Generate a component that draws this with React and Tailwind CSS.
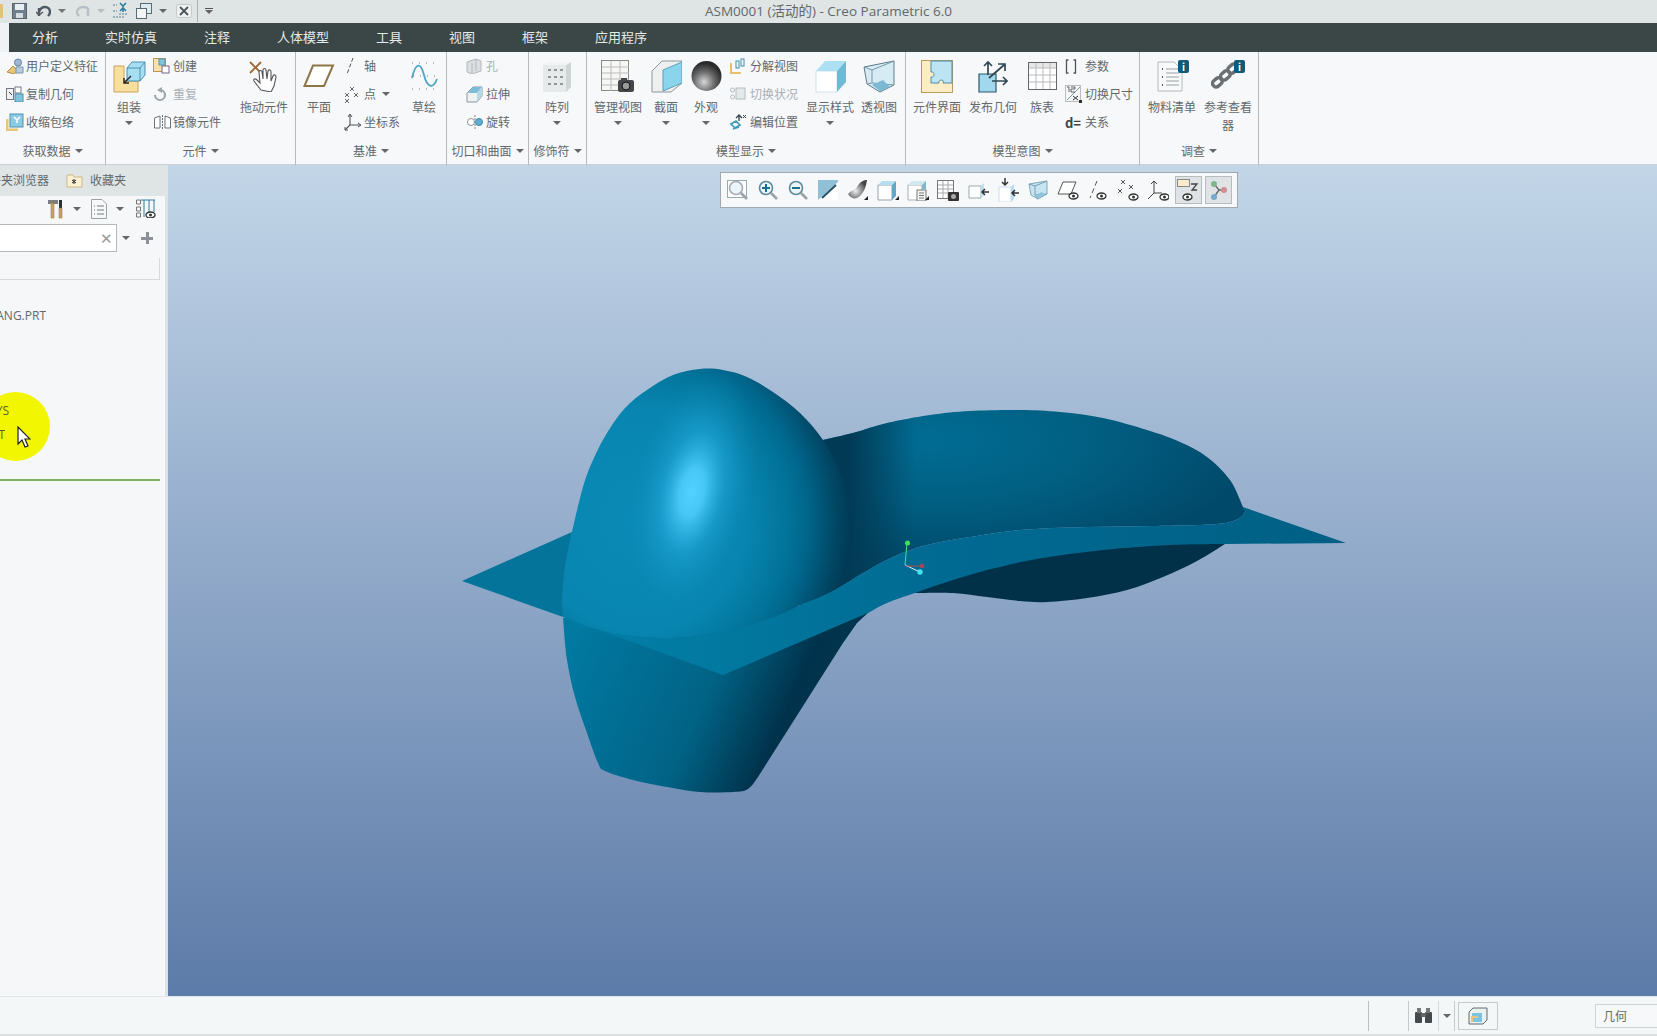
import React from "react";

const Svg = ({ w = 16, h = 16, vb, children, className = "" }) => (
  <svg width={w} height={h} viewBox={vb || `0 0 ${w} ${h}`} className={`block shrink-0 ${className}`} fill="none">{children}</svg>
);
const Arrow = ({ className = "" }) => <span className={`inline-block w-0 h-0 border-x-[4px] border-x-transparent border-t-[4px] border-t-[#666] ${className}`} />;

/* quick access icons */
const Save = () => <Svg w={15} h={16}><rect x=".5" y=".5" width="14" height="15" fill="#6f7f8c" stroke="#58646e"/><rect x="3" y="1" width="9" height="6" fill="#e8eef2"/><rect x="4" y="10" width="7" height="5" fill="#d5dce0"/></Svg>;
const Undo = ({ c = "#4f5b64" }) => <Svg w={15} h={13}><path d="M3 11V3M3 7c1-3 3-5 6-5 3 0 5 2 5 5 0 2-1 3-2 4" stroke={c} strokeWidth="2.4"/><path d="M0 7l3 3 4-3" stroke={c} strokeWidth="1.5"/></Svg>;
const Redo = () => <Svg w={15} h={13}><path d="M12 11V4C11 2 9 2 7 2 4 2 1 4 1 7c0 2 1 3 2 4" stroke="#b7c0c6" strokeWidth="2.4"/></Svg>;
const Regen = () => <Svg w={17} h={18}><path d="M1 3h4M1 9h4M1 15h12M7 12h8" stroke="#5a7d90" strokeWidth="1.200" strokeDasharray="2 1"/><path d="M8 1l3 3 3-3M11 4v6M8 9l3-3 3 3" stroke="#2f7f9c" strokeWidth="1.6"/></Svg>;
const Windows = () => <Svg w={16} h={16}><rect x="4.5" y=".5" width="11" height="10" fill="#dce9ef" stroke="#5a6a74"/><rect x=".5" y="5.5" width="10" height="10" fill="#f1f5f6" stroke="#5a6a74"/></Svg>;
const CloseIc = () => <Svg w={16} h={14}><rect x=".5" y=".5" width="15" height="13" fill="#eef1f2" stroke="#c3cacd" rx="2"/><path d="M4 3l8 8M12 3l-8 8" stroke="#4b555c" strokeWidth="1.800"/></Svg>;

/* ribbon small icons */
const UdfIc = () => <Svg w={18} h={16}><circle cx="12" cy="4.5" r="3.5" fill="#9fb8d6" stroke="#6a7f9a"/><path d="M1 14l6-6 5 5-4 3z" fill="#e9c477" stroke="#b5904a"/><path d="M10 9h7v6h-7z" fill="#b8cee0" stroke="#7a93a8"/></Svg>;
const CopyGeo = () => <Svg w={18} h={16}><rect x=".5" y="2.5" width="7" height="11" fill="#eef2f4" stroke="#778"/><rect x="9" y="1" width="6" height="6" fill="#fff" stroke="#778"/><rect x="9" y="8" width="8" height="8" fill="#7fc3de" stroke="#4a90ae"/><path d="M3 6l3 3" stroke="#333"/></Svg>;
const Shrink = () => <Svg w={18} h={18}><rect x="4" y="1" width="13" height="13" fill="#8ecbe4" stroke="#4f93b0"/><path d="M1 6v11h11" stroke="#e6c679" strokeWidth="3"/><path d="M8 4l3 3 3-3M11 7v3" stroke="#fff" strokeWidth="1.5"/></Svg>;
const Create = () => <Svg w={17} h={16}><rect x=".5" y=".5" width="12" height="13" fill="#f6e2ae" stroke="#b99a58"/><rect x="6" y="1" width="6" height="6" fill="#7fc3de" stroke="#5b95ad"/><rect x="9" y="8" width="7" height="7" fill="#fff" stroke="#768"/></Svg>;
const Repeat = () => <Svg w={14} h={15}><path d="M7 3a5 5 0 1 1-5 5" stroke="#9da6ac" strokeWidth="2.2"/><path d="M9 0v6L4 3z" fill="#9da6ac"/></Svg>;
const Mirror = () => <Svg w={19} h={15}><path d="M7 1L1.500 3v10H7zM12 1l5.500 2v10H12z" stroke="#6b7378" fill="#fff"/><path d="M9.500 0v15" stroke="#6b7378" strokeDasharray="2 1"/></Svg>;
const Axis = () => <Svg w={12} h={18}><path d="M9 1L3 17" stroke="#555" strokeDasharray="4 2"/></Svg>;
const Pts = () => <Svg w={17} h={17}>{[[3,9],[8,3],[12,9],[3,15]].map(([x,y],i)=><path key={i} d={`M${x-2} ${y-2}l4 4M${x+2} ${y-2}l-4 4`} stroke="#666"/>)}</Svg>;
const Csys = () => <Svg w={17} h={18}><path d="M6 2v10L1 17M6 12h10" stroke="#4e5458" strokeWidth="1.100"/><path d="M4 4l2-3 2 3M14 10l3 2-3 2M1 14v3h3" stroke="#4e5458"/></Svg>;
const Hole = () => <Svg w={16} h={16}><path d="M1 4l9-3 5 2v10l-9 3-5-2z" fill="#dcdfe1" stroke="#b4babd"/><path d="M6 5v10M10 2v11" stroke="#b4babd"/></Svg>;
const Extrude = () => <Svg w={18} h={18}><path d="M1 8l6-6h9v9l-5 6H1z" fill="#eef2f3" stroke="#8c979d"/><path d="M7 2h9l-5 6H2z" fill="#7cbcd8"/><path d="M11 8v9l5-6V2z" fill="#b5d7e6"/></Svg>;
const Revolve = () => <Svg w={18} h={14}><circle cx="5" cy="7" r="3.500" fill="#fff" stroke="#8c979d"/><circle cx="13" cy="7" r="3.500" fill="#5cb0d2" stroke="#3d88a8"/><path d="M9 0v14" stroke="#888" strokeDasharray="2 1"/></Svg>;
const Explode = () => <Svg w={16} h={16}><path d="M1 5v10h10" stroke="#e7bf6d" strokeWidth="2"/><rect x="6" y="3" width="3" height="7" stroke="#3f8fb0"/><rect x="11" y="1" width="3" height="7" stroke="#3f8fb0"/></Svg>;
const Switch = () => <Svg w={16} h={14}><circle cx="2.500" cy="3" r="2" stroke="#b4bbc0"/><circle cx="2.500" cy="10" r="2" stroke="#b4bbc0"/><rect x="6" y="1" width="9" height="11" fill="#e6e9ea" stroke="#b4bbc0"/></Svg>;
const EditPos = () => <Svg w={18} h={17}><path d="M1 10l5-3 4 4-5 3zM3 15l6-2" stroke="#3e98b8" strokeWidth="1.700"/><path d="M6 4l3-3 3 3M9 1v6" stroke="#3a4a50" strokeWidth="1.400"/><path d="M13 1l3 3M16 1l-3 3" stroke="#444"/></Svg>;
const Params = () => <Svg w={12} h={15}><path d="M3.500 1H1.500v13h2M8.500 1h2v13h-2" stroke="#555" strokeWidth="1.300"/></Svg>;
const DimSw = () => <Svg w={17} h={18}><rect x=".5" y=".5" width="15" height="16" fill="#f5f6f7" stroke="#bbb"/><path d="M2 15L15 2" stroke="#79a"/><path d="M2 2h2v5M6 2h4v2H6v3h4" stroke="#555" strokeWidth=".9"/><rect x="14" y="15" width="3" height="3" fill="#333"/><path d="M8 11l5 4M13 11l-5 4" stroke="#333"/></Svg>;
const Small = ({ I, t, off }) => (
  <div className={`h-[28px] flex items-center ${off ? "text-[#aab0b4]" : "text-[#63686b]"}`}>
    <span className="w-[20px] flex justify-start items-center"><I /></span>
    <span className="whitespace-nowrap">{t}</span>
  </div>
);

/* ribbon big icons */
const Assemble = () => <Svg w={33} h={33}><path d="M1 6v26h24v-11H11V6z" fill="#f8df9e" stroke="#c9a458"/><path d="M14 8l5-6h13v13l-5 6H14z" fill="#a6dff3" stroke="#4a90ae"/><path d="M14 8h13v13M27 8l5-6" stroke="#4a90ae"/><path d="M11 23l7-7M11 18v5h5" stroke="#222" strokeWidth="1.400"/></Svg>;
const Drag = () => <Svg w={30} h={32}><path d="M1 2l11 11M12 2L1 13" stroke="#9c6b35" strokeWidth="1.800"/><path d="M12 30l-7-9c-1-2 1-3 3-1l3 3-1-11c0-2 3-2 3 0l1 7 0-9c0-2 3-2 3 0l1 9 1-8c1-2 3-1 3 1l0 9 2-5c1-2 3-1 3 1l-2 9-3 6z" fill="#fff" stroke="#555" strokeWidth="1.100"/></Svg>;
const Plane = () => <Svg w={32} h={24}><path d="M10 1.500h20L21 22H1.500z" fill="#fff" stroke="#8e7446" strokeWidth="2"/></Svg>;
const Sketch = () => <Svg w={27} h={30}><path d="M1 17C5 0 10 2 13 14s9 15 13 4" stroke="#4ea3c6" strokeWidth="1.800"/><path d="M1 2h26M1 28h26M2 15h24" stroke="#778" strokeDasharray="1 6"/></Svg>;
const Pattern = () => <Svg w={30} h={31}><path d="M1 4h23v27H1z" fill="#e7eaeb"/><path d="M24 4l5-3v25l-5 5z" fill="#cfd4d6"/><path d="M1 4l5-3h23l-5 3z" fill="#f2f3f3"/>{[8,15,22].map(y=>[6,12,18].map(x=><rect key={x+"-"+y} x={x} y={y} width="3" height="2" fill="#8f979b"/>))}</Svg>;
const Views = () => <Svg w={34} h={33}><rect x=".5" y=".5" width="27" height="30" fill="#f7f7f5" stroke="#8a8a86"/><path d="M1 7h27M1 13h27M1 19h27M1 25h27M10 1v30M19 1v30" stroke="#bbb"/><rect x="17" y="20" width="16" height="12" rx="2" fill="#44484c"/><circle cx="25" cy="26" r="4" fill="#999" stroke="#111"/><rect x="20" y="18" width="6" height="3" fill="#44484c"/></Svg>;
const Section = () => <Svg w={31} h={33}><path d="M1 11L11 1h20v22L20 32H1z" fill="#eef0f0" stroke="#8d9599"/><path d="M12 10L31 2v21l-19 8z" fill="#8ad5ec" stroke="#59a0ba"/></Svg>;
const Sphere = () => <Svg w={31} h={32}><defs><radialGradient id="sp" cx=".42" cy=".7" r=".62"><stop offset="0" stopColor="#d6d6d6"/><stop offset=".55" stopColor="#6c6c6c"/><stop offset="1" stopColor="#2a2a2a"/></radialGradient></defs><circle cx="15.500" cy="16" r="15" fill="url(#sp)"/></Svg>;
const Display = () => <Svg w={31} h={33}><path d="M1 11h21v21H1z" fill="#fff" stroke="#cfe3ec"/><path d="M1 11L10 1h21L22 11z" fill="#aee0f3"/><path d="M22 11l9-10v21l-9 10z" fill="#6fb8d6"/></Svg>;
const Persp = () => <Svg w={32} h={33}><path d="M1 7L31 1v24l-14 7L4 24z" fill="#d6ebf4" stroke="#5e7c8a"/><path d="M1 7l8 3 22-9M9 10v13l22 2M9 23l-5 1M17 32l2-8" stroke="#7a98a6"/><path d="M9 25l11-5 7 7-10 4z" fill="#7bb8d3"/></Svg>;
const Puzzle = () => <Svg w={32} h={33}><rect x=".5" y=".5" width="31" height="32" fill="#fbedc6" stroke="#b89b5a"/><path d="M10 1h21v22h-9c2-4-5-4-4 0H10v-6c4 1 4-6 0-5z" fill="#bce4f3" stroke="#4e8da6"/></Svg>;
const Publish = () => <Svg w={30} h={33}><path d="M1 14h17v18H1z" fill="#a2d8ee" stroke="#2e5868" strokeWidth="1.200"/><path d="M10 15V2M6 6l4-4 4 4M11 18L26 5M20 4h7v7M14 21h15M25 17l4 4-4 4" stroke="#2e4854" strokeWidth="1.700"/></Svg>;
const Family = () => <Svg w={29} h={28}><rect x=".5" y=".5" width="28" height="27" fill="#fff" stroke="#666"/><rect x="1" y="1" width="27" height="5" fill="#e8e8e8"/><path d="M1 6h27M1 13h27M1 20h27M8 1v26M15 1v26M22 1v26" stroke="#bbb"/></Svg>;
const Info = () => <span className="absolute top-[1px] right-0 w-[11px] h-[13px] rounded-[2px] bg-[#115b78] text-white text-[10px] leading-[13px] text-center font-bold">i</span>;
const Bom = () => <div className="relative w-[34px] h-[34px]"><Svg w={26} h={31} className="mt-[2px] ml-[2px]"><path d="M1 1h16l8 8v21H1z" fill="#f8f9f9" stroke="#b5babd"/><path d="M5 8h1M5 16h1M5 24h1" stroke="#222" strokeWidth="1.500"/><path d="M9 8h13M9 12h13M9 16h13M9 20h13M9 24h13" stroke="#99a0a4"/></Svg><Info /></div>;
const Chain = () => <div className="relative w-[34px] h-[34px]"><Svg w={29} h={31} className="mt-[2px]"><g stroke="#6b6f72" strokeWidth="3.400" fill="none"><rect x="1" y="18" width="10" height="7" rx="3" transform="rotate(-40 6 21)"/><rect x="9" y="11" width="10" height="7" rx="3" transform="rotate(-40 14 14)"/><rect x="17" y="4" width="10" height="7" rx="3" transform="rotate(-40 22 8)"/></g></Svg><Info /></div>;

const Big = ({ I, t, w, arrow, ml = 0 }) => (
  <div style={{ width: w, marginLeft: ml }} className="flex flex-col items-center shrink-0 text-[#63686b] pt-[4px]">
    <div className="h-[40px] flex items-center justify-center"><I /></div>
    <div className="text-center leading-[18px] mt-[2px] whitespace-nowrap">{t}</div>
    {arrow && <Arrow className="mt-[5px]" />}
  </div>
);
const Col = ({ ml = 0, children }) => <div style={{ marginLeft: ml }} className="flex flex-col shrink-0">{children}</div>;
const Group = ({ w, label, children }) => (
  <div style={{ width: w }} className="h-[113px] shrink-0 flex flex-col relative border-r border-r-[#b5babc]">
    <div className="h-[90px] flex overflow-hidden">{children}</div>
    <div className="h-[18px] w-full flex items-center justify-center gap-[4px] text-[#63686b] whitespace-nowrap">
      {label}<Arrow />
    </div>
  </div>
);

/* toolbar icons */
const Lens = ({ kind }) => <Svg w={22} h={22}>{kind === "box" && <rect x=".5" y="1.500" width="19" height="17" stroke="#9aa" fill="#fff"/>}<circle cx="9" cy="9" r="6.500" fill="#eaf5fa" stroke={kind === "box" ? "#aab" : "#5f8a9c"} strokeWidth="1.600"/><path d="M14 14l6 6" stroke="#99a3a8" strokeWidth="2.600"/>{kind === "in" && <path d="M5 9h8M9 5v8" stroke="#1d6f8e" strokeWidth="2"/>}{kind === "out" && <path d="M5 9h8" stroke="#1d6f8e" strokeWidth="2"/>}</Svg>;
const Reorient = () => <Svg w={20} h={20}><path d="M0 0h20v20H0z" fill="#8fc0d6"/><path d="M0 20L20 2v18z" fill="#fff"/><path d="M4 18L18 5" stroke="#24506a" strokeWidth="2"/></Svg>;
const Tri = () => <span className="absolute right-[1px] bottom-[1px] w-0 h-0 border-l-[4px] border-l-transparent border-b-[4px] border-b-[#222]" />;
const Blob = () => <div className="relative"><Svg w={22} h={22}><defs><radialGradient id="bl" cx=".4" cy=".6" r=".6"><stop offset="0" stopColor="#eee"/><stop offset="1" stopColor="#444"/></radialGradient></defs><path d="M1 15c4-5 6-2 9-7s6-7 10-7c-1 7-3 12-7 16s-9 3-12-2z" fill="url(#bl)"/></Svg><Tri /></div>;
const Cube = () => <div className="relative pr-[3px]"><Svg w={20} h={21}><path d="M1 5h14v15H1z" fill="#fff" stroke="#97a5ac"/><path d="M1 5l4-4h14l-4 4z" fill="#b5dff0"/><path d="M15 5l4-4v15l-4 4z" fill="#5fa9c8"/></Svg><Tri /></div>;
const CubeDoc = () => <div className="relative pr-[3px]"><Svg w={20} h={21}><path d="M1 5h14v15H1z" fill="#fff" stroke="#a5b0b5"/><path d="M1 5l4-4h14l-4 4z" fill="#cfe8f2"/><path d="M15 5l4-4v8h-4z" fill="#7db8d0"/><rect x="10" y="10" width="9" height="11" fill="#f3f4f4" stroke="#777"/><path d="M12 13h5M12 15.500h5M12 18h5" stroke="#777"/></Svg><Tri /></div>;
const TableCam = () => <Svg w={22} h={21}><rect x=".5" y=".5" width="16" height="18" fill="#fff" stroke="#777"/><path d="M1 5h15M1 9h15M1 13h15M6 1v17M11 1v17" stroke="#aaa"/><rect x="11" y="12" width="11" height="9" rx="1" fill="#333"/><circle cx="16.500" cy="16.500" r="2.500" fill="#aaa"/></Svg>;
const Clip1 = () => <Svg w={21} h={17}><path d="M1 4h12v12H1z" fill="#fff" stroke="#9aa"/><path d="M13 4l3-3v12l-3 3z" fill="#b5dff0"/><path d="M21 10h-7M17 7l-3 3 3 3" stroke="#333" strokeWidth="1.500"/></Svg>;
const Clip2 = () => <Svg w={21} h={24}><path d="M1 9h12v15H1z" fill="#fff" stroke="#cde"/><path d="M13 9l3-3v15l-3 3z" fill="#b5dff0"/><path d="M21 15h-7M17 12l-3 3 3 3M7 0v7M4 4l3 3 3-3" stroke="#333" strokeWidth="1.500"/></Svg>;
const Clip3 = () => <Svg w={20} h={20}><path d="M1 4L19 1v13l-9 5-7-4z" fill="#c6e4f1" stroke="#7fa9bc"/><path d="M1 4l6 2 12-5M7 6v9l12-1M7 15l3 4" stroke="#7a9fb0"/><path d="M7 15l7-3 3 3-7 3z" fill="#8dc4da"/></Svg>;
const Eye = ({ x, y }) => <g transform={`translate(${x} ${y})`}><ellipse cx="4.500" cy="3" rx="4.500" ry="3" fill="#fff" stroke="#333" strokeWidth="1.300"/><circle cx="4.500" cy="3" r="1.500" fill="#333"/></g>;
const VisPlane = () => <Svg w={22} h={20}><path d="M6 2h13l-5 12H1z" stroke="#555" fill="#fff"/><Eye x={12} y={13}/></Svg>;
const VisAxis = () => <Svg w={20} h={20}><path d="M9 1L2 18" stroke="#555" strokeDasharray="5 3"/><Eye x={9} y={13}/></Svg>;
const VisPts = () => <Svg w={22} h={21}>{[[6,2],[14,7],[3,11]].map(([x,y],i)=><path key={i} d={`M${x-2} ${y-2}l4 4M${x+2} ${y-2}l-4 4`} stroke="#555"/>)}<Eye x={12} y={14}/></Svg>;
const VisCsys = () => <Svg w={22} h={21}><path d="M7 1v12L1 19M7 13h8M4 4l3-3 3 3" stroke="#444"/><Eye x={13} y={14}/></Svg>;
const VisAnn = () => <Svg w={22} h={24}><rect x=".5" y="1.500" width="12" height="7" fill="#f8eccc" stroke="#888"/><path d="M14 6h6l-5 6h5" stroke="#444" strokeWidth="1.300"/><Eye x={6} y={16}/></Svg>;
const Tree = () => <Svg w={22} h={22}><path d="M7 5l5 6M7 18l5-7M12 11h5" stroke="#666" strokeWidth="1.300"/><circle cx="7" cy="5" r="3" fill="#7fb58d"/><circle cx="17" cy="11" r="3" fill="#d48b92"/><circle cx="7" cy="18" r="3" fill="#79a9cc"/></Svg>;

/* smooth path through points (the model silhouette, in page coordinates) */
const smooth = (pts) => {
  let d = `M${pts[0][0]} ${pts[0][1]}`;
  for (let i = 0; i < pts.length - 1; i++) {
    const p0 = pts[i - 1] || pts[i], p1 = pts[i], p2 = pts[i + 1], p3 = pts[i + 2] || p2;
    d += ` C${p1[0] + (p2[0] - p0[0]) / 6} ${p1[1] + (p2[1] - p0[1]) / 6} ${p2[0] - (p3[0] - p1[0]) / 6} ${p2[1] - (p3[1] - p1[1]) / 6} ${p2[0]} ${p2[1]}`;
  }
  return d;
};
const tail = (d) => d.replace(/^M[^C]*/, "");
const seamR = [[1243,507],[1245,512],[1238,519],[1217,524],[1153,526],[1087,527],[1020,530],[970,537],[927,545],[893,557],[863,573],[840,587],[820,597],[800,605]];
const seamL = [[800,605],[773,617],[723,632],[673,638],[623,635],[590,627],[563,617]];
const leftOutline = [[563,617],[562,600],[565,567],[572,532],[583,487],[593,460],[607,433],[625,408],[647,390],[673,375],[700,369],[723,370],[747,377],[773,392],[800,413],[823,440],[840,472],[850,510],[852,550],[838,588],[800,605]];
const rightTop = [[823,440],[853,433],[887,423],[930,415],[970,411],[1020,410],[1060,412],[1103,418],[1147,430],[1180,442],[1207,457],[1230,480],[1243,507]];
const bumpL = smooth(leftOutline) + " " + tail(smooth(seamL)) + "Z";
const bumpR = smooth(rightTop) + " " + tail(smooth(seamR)) + "L800 500Z";
const lowerL = smooth([[563,618],[567,660],[575,697],[587,733],[598,763],[605,771],[633,780],[667,787],[700,792],[733,792],[748,789],[758,777]]) + " L843 643 L857 623 L870 611 L700 600Z";
const lowerR = smooth([[915,593],[953,593],[987,597],[1020,601],[1047,602],[1087,598],[1127,590],[1163,577],[1197,561],[1225,544]]) + " L1100 530 L930 550Z";
const front = smooth(seamR) + " " + tail(smooth(seamL)) + " L723 675 L870 612 " + tail(smooth([[870,612],[887,603],[915,593],[947,582],[987,570],[1037,559],[1103,550],[1170,545],[1225,544]])) + " L1346 543Z";

function Model() {
  return (
    <svg width="1489" height="831" viewBox="168 165 1489 831" className="block" fill="none">
      <defs>
        <radialGradient id="ul" gradientUnits="userSpaceOnUse" cx="0" cy="0" r="1" gradientTransform="translate(640 520) scale(210 220)">
          <stop offset="0" stopColor="#0a8ab6"/><stop offset=".5" stopColor="#0886b1"/><stop offset=".7" stopColor="#02749b"/><stop offset=".8" stopColor="#01658a"/><stop offset=".92" stopColor="#014a68"/><stop offset="1" stopColor="#013a55"/>
        </radialGradient>
        <radialGradient id="hl" gradientUnits="userSpaceOnUse" cx="0" cy="0" r="1" gradientTransform="translate(692 492) rotate(12) scale(62 125)">
          <stop offset="0" stopColor="#52d2ff"/><stop offset=".2" stopColor="#45c6f5"/><stop offset=".5" stopColor="#1fa5d5" stopOpacity=".6"/><stop offset="1" stopColor="#0a86b2" stopOpacity="0"/>
        </radialGradient>
        <radialGradient id="ur" gradientUnits="userSpaceOnUse" cx="0" cy="0" r="1" gradientTransform="translate(930 440) scale(330 125)">
          <stop offset="0" stopColor="#016c93"/><stop offset=".5" stopColor="#015f82"/><stop offset="1" stopColor="#01496a"/>
        </radialGradient>
        <linearGradient id="neck" gradientUnits="userSpaceOnUse" x1="848" x2="915" y1="0" y2="0">
          <stop offset="0" stopColor="#013a55"/><stop offset="1" stopColor="#013a55" stopOpacity="0"/>
        </linearGradient>
        <linearGradient id="ll" gradientUnits="userSpaceOnUse" x1="562" y1="650" x2="852" y2="782">
          <stop offset="0" stopColor="#017aa2"/><stop offset=".22" stopColor="#016f95"/><stop offset=".47" stopColor="#016386"/><stop offset=".6" stopColor="#014a68"/><stop offset=".72" stopColor="#01324b"/><stop offset="1" stopColor="#013a55"/>
        </linearGradient>
        <linearGradient id="fr" gradientUnits="userSpaceOnUse" x1="562" x2="1346" y1="0" y2="0">
          <stop offset="0" stopColor="#0280a9"/><stop offset=".22" stopColor="#02789f"/><stop offset=".45" stopColor="#016b93"/><stop offset="1" stopColor="#015f84"/>
        </linearGradient>
      </defs>
      <path d="M462 581 L572 532 L563 617Z" fill="#04749b"/>
      <path d={lowerL} fill="url(#ll)"/>
      <path d={lowerR} fill="#013149"/>
      <path d={bumpR} fill="url(#ur)"/>
      <path d={bumpR} fill="url(#neck)"/>
      <path d={bumpL} fill="url(#ul)"/>
      <path d={bumpL} fill="url(#hl)"/>
      <path d={front} fill="url(#fr)"/>
      <path d="M907 543 L905 565" stroke="#46e08c" strokeWidth="1"/>
      <path d="M905 565 L920 572" stroke="#e4f6f8" strokeWidth="1"/>
      <path d="M905 566 L922 566" stroke="#a84a5c" strokeWidth="1"/>
      <circle cx="907.500" cy="543" r="2.500" fill="#3ee05e"/>
      <circle cx="922" cy="566" r="2.200" fill="#a8475c"/>
      <circle cx="920" cy="572" r="2.700" fill="#45e2f2"/>
    </svg>
  );
}

const Btn = ({ children, on }) => (
  <div className={`flex items-center justify-center h-[28px] ${on ? "w-[27px] mx-[1.500px] bg-[#dfe3e5] border border-[#b6bcc0]" : "w-[30px]"}`}>{children}</div>
);

export default function App() {
  return (
    <div className="w-[1657px] h-[1036px] overflow-hidden relative flex flex-col text-[12px] [font-family:'Noto_Sans_CJK_SC','Noto_Sans',sans-serif] bg-[#f5f7f9]">
      {/* title bar */}
      <div className="h-[23px] shrink-0 bg-[#dfe4e4] grid grid-cols-[1fr_auto_1fr] items-center pb-[6px]">
        <div className="flex items-center">
          <span className="w-[3px] h-[14px] bg-[#e3c27a]" />
          <span className="ml-[9px]"><Save /></span>
          <span className="ml-[9px]"><Undo /></span><Arrow className="ml-[7px] !border-t-[#777]" />
          <span className="ml-[10px]"><Redo /></span><Arrow className="ml-[6px] !border-t-[#bbb]" />
          <span className="ml-[7px]"><Regen /></span>
          <span className="ml-[7px]"><Windows /></span><Arrow className="ml-[7px]" />
          <span className="ml-[9px]"><CloseIc /></span>
          <span className="ml-[5px] w-px h-[22px] bg-[#aab0b2]" />
          <span className="ml-[7px] flex flex-col items-center gap-[1px]"><span className="w-[8px] h-px bg-[#555]" /><Arrow /></span>
        </div>
        <div className="text-[13.500px] text-[#63686b] [font-family:'Open_Sans','Noto_Sans_CJK_SC',sans-serif] whitespace-nowrap">ASM0001 (活动的) - Creo Parametric 6.0</div>
        <div />
      </div>
      {/* tabs */}
      <div className="h-[29px] shrink-0 flex bg-[#eef2f4]">
        <div className="ml-[9px] flex-1 bg-[#3b4647] flex items-center gap-[47px] pl-[23px] pb-[2px] text-[13px] text-[#e4e9e9]">
          {["分析", "实时仿真", "注释", "人体模型", "工具", "视图", "框架", "应用程序"].map((t) => <span key={t} className="whitespace-nowrap">{t}</span>)}
        </div>
      </div>
      {/* ribbon */}
      <div className="h-[113px] shrink-0 flex bg-[#f6f8fa] border-b border-b-[#c9d2d8]">
        <Group w={106} label="获取数据">
          <Col ml={6}>
            <Small I={UdfIc} t="用户定义特征" />
            <Small I={CopyGeo} t="复制几何" />
            <Small I={Shrink} t="收缩包络" />
          </Col>
        </Group>
        <Group w={190} label="元件">
          <Big I={Assemble} t="组装" w={46} arrow />
          <Col ml={1}>
            <Small I={Create} t="创建" />
            <Small I={Repeat} t="重复" off />
            <Small I={Mirror} t="镜像元件" />
          </Col>
          <div className="ml-[8px] mt-[6px] h-[75px] w-px bg-[#d8dcde]" />
          <Big I={Drag} t="拖动元件" w={66} ml={2} />
        </Group>
        <Group w={151} label="基准">
          <Big I={Plane} t="平面" w={46} />
          <Col ml={2}>
            <Small I={Axis} t="轴" />
            <Small I={Pts} t={<span className="flex items-center gap-[6px]">点<Arrow /></span>} />
            <Small I={Csys} t="坐标系" />
          </Col>
          <Big I={Sketch} t="草绘" w={48} />
        </Group>
        <Group w={82} label="切口和曲面">
          <Col ml={19}>
            <Small I={Hole} t="孔" off />
            <Small I={Extrude} t="拉伸" />
            <Small I={Revolve} t="旋转" />
          </Col>
        </Group>
        <Group w={58} label="修饰符">
          <Big I={Pattern} t="阵列" w={56} arrow />
        </Group>
        <Group w={319} label="模型显示">
          <Big I={Views} t="管理视图" w={58} ml={2} arrow />
          <Big I={Section} t="截面" w={38} arrow />
          <Big I={Sphere} t="外观" w={42} arrow />
          <Col ml={3}>
            <Small I={Explode} t="分解视图" />
            <Small I={Switch} t="切换状况" off />
            <Small I={EditPos} t="编辑位置" />
          </Col>
          <Big I={Display} t="显示样式" w={52} ml={6} arrow />
          <Big I={Persp} t="透视图" w={46} />
        </Group>
        <Group w={234} label="模型意图">
          <Big I={Puzzle} t="元件界面" w={54} ml={4} />
          <Big I={Publish} t="发布几何" w={56} ml={1} />
          <Big I={Family} t="族表" w={42} />
          <Col ml={2}>
            <Small I={Params} t="参数" />
            <Small I={DimSw} t="切换尺寸" />
            <Small I={() => <span className="text-[#444] font-bold text-[13px] leading-none">d=</span>} t="关系" />
          </Col>
        </Group>
        <Group w={119} label="调查">
          <Big I={Bom} t="物料清单" w={54} ml={5} />
          <Big I={Chain} t={<>参考查看<br />器</>} w={58} />
        </Group>
      </div>
      {/* body */}
      <div className="flex-1 flex min-h-0">
        <div className="w-[168px] shrink-0 flex flex-col bg-[#dbe3e7] relative overflow-hidden">
          <div className="h-[31px] shrink-0 bg-[#dfe4e4] flex items-center pb-[2px] text-[#63686b] overflow-hidden">
            <span className="ml-[-23px] whitespace-nowrap w-[72px]">文件夹浏览器</span>
            <span className="ml-[17px]"><Svg w={17} h={16}><path d="M1 3h6l1 2h8v10H1z" fill="#fbf1d2" stroke="#c9b98a"/><path d="M8 7v5M6 8l4 3M10 8l-4 3" stroke="#333"/></Svg></span>
            <span className="ml-[7px] whitespace-nowrap">收藏夹</span>
          </div>
          <div className="w-[165px] flex-1 bg-[#f5f7f9] flex flex-col">
            <div className="h-[25px] shrink-0 flex items-center pl-[48px]">
              <Svg w={16} h={20}><rect x="0" y="1" width="10" height="4" fill="#7b7f82"/><rect x="3" y="4" width="3" height="15" fill="#c9a360" stroke="#8f733d" strokeWidth=".5"/><rect x="11" y="1" width="3" height="8" fill="#2b3033"/><rect x="11" y="9" width="3" height="10" fill="#c9a360" stroke="#8f733d" strokeWidth=".5"/></Svg>
              <Arrow className="ml-[9px]" />
              <span className="ml-[10px]"><Svg w={16} h={20}><path d="M.5.500H11l4.500 4.500v14.500H.5z" fill="#f7f8f8" stroke="#99a2a7"/><path d="M3 7h1M3 11h1M3 15h1M6 7h7M6 11h7M6 15h7" stroke="#777"/></Svg></span>
              <Arrow className="ml-[9px]" />
              <span className="ml-[12px]"><Svg w={21} h={19}><path d="M.5 1h4v4h-4zM.5 8h4v4h-4zM.5 14h4v4h-4z" stroke="#777"/><path d="M8 1v17M13 1v14M18 1v12M5 1h14" stroke="#2f7f9c"/><Eye x={10} y={13}/></Svg></span>
            </div>
            <div className="h-[34px] shrink-0 flex items-center">
              <div className="w-[117px] h-[28px] bg-white border border-l-0 border-[#b3b8bb] flex items-center justify-end pr-[3px] text-[#999] text-[15px]">✕</div>
              <Arrow className="ml-[5px]" />
              <span className="ml-[11px] w-[12px] h-[12px] relative flex items-center justify-center"><span className="w-[12px] h-[3px] bg-[#8b9196]" /><span className="absolute left-[4.500px] top-0 w-[3px] h-[12px] bg-[#8b9196]" /></span>
            </div>
            <div className="mt-[3px] h-[22px] w-[160px] shrink-0 border border-l-0 border-t-0 border-[#d6dadc]" />
            <div className="mt-[26px] h-[20px] leading-[20px] text-[#63686b] [font-family:'Open_Sans',sans-serif] overflow-hidden whitespace-nowrap w-[46px] flex justify-end">ANG.PRT</div>
            <div className="mt-[153px] h-[2px] w-[160px] bg-[#78b064]" />
          </div>
        </div>
        <div className="flex-1 relative bg-gradient-to-b from-[#c3d6e8] to-[#5d7ba8]">
          <Model />
          <div className="absolute left-[552px] top-[7px] w-[518px] h-[36px] bg-[#f6f8f9] border border-[#a0a9b0] flex items-center pl-[2px]">
            <Btn><Lens kind="box" /></Btn><Btn><Lens kind="in" /></Btn><Btn><Lens kind="out" /></Btn>
            <Btn><Reorient /></Btn><Btn><Blob /></Btn><Btn><Cube /></Btn><Btn><CubeDoc /></Btn><Btn><TableCam /></Btn>
            <Btn><Clip1 /></Btn><Btn><Clip2 /></Btn><Btn><Clip3 /></Btn><Btn><VisPlane /></Btn><Btn><VisAxis /></Btn>
            <Btn><VisPts /></Btn><Btn><VisCsys /></Btn><Btn on><VisAnn /></Btn><Btn on><Tree /></Btn>
          </div>
        </div>
      </div>
      {/* status */}
      <div className="h-[40px] shrink-0 bg-[#f4f7f8] border-b-[2px] border-b-[#dcdfe0] border-t border-t-[#dfe5e8] flex items-center justify-end">
        <span className="w-px h-[30px] bg-[#b9bec1]" />
        <div className="ml-[39px] h-[30px] w-[47px] border-x border-[#c5cacc] flex items-center">
          <span className="w-[29px] flex justify-center"><Svg w={19} h={16}><rect x="1" y="4" width="7" height="11" rx="1" fill="#44494c"/><rect x="11" y="4" width="7" height="11" rx="1" fill="#44494c"/><rect x="3" y="0" width="4" height="5" fill="#777"/><rect x="12" y="0" width="4" height="5" fill="#777"/><rect x="7" y="5" width="5" height="4" fill="#666"/></Svg></span>
          <span className="w-px h-full bg-[#d5d8da]" />
          <Arrow className="ml-[4px]" />
        </div>
        <div className="ml-[3px] h-[28px] w-[40px] border border-[#c5cacc] flex items-center justify-center">
          <Svg w={20} h={18}><path d="M1 5l4-4h14v12l-4 4H1z" fill="#e9f0f0" stroke="#5d6a70"/><rect x="4" y="6" width="10" height="9" fill="#7dc3dd"/><path d="M4 15v-5h6" stroke="#e7c77c" strokeWidth="2"/></Svg>
        </div>
        <div className="ml-[97px] h-[24px] w-[62px] border border-r-0 border-[#d0d4d6] bg-[#f6f8f9] flex items-center pl-[7px] text-[#63686b]">几何</div>
      </div>
      {/* pointer overlay */}
      <div className="absolute left-[-19px] top-[392px] w-[69px] h-[69px] rounded-full bg-[#f2f700]" />
      <div className="absolute left-0 top-[401px] w-[9px] overflow-hidden flex justify-end text-[#5a5f20] [font-family:'Open_Sans',sans-serif] leading-[20px]">YS</div>
      <div className="absolute left-0 top-[425px] w-[5px] overflow-hidden flex justify-end text-[#5a5f20] [font-family:'Open_Sans',sans-serif] leading-[20px]">T</div>
      <svg width="14" height="22" viewBox="0 0 14 22" className="absolute left-[17px] top-[426px]" fill="none"><path d="M1 1v17l4-4 3 7 3-1-3-7h5z" fill="#fff" stroke="#222" strokeWidth="1.200"/></svg>
    </div>
  );
}
